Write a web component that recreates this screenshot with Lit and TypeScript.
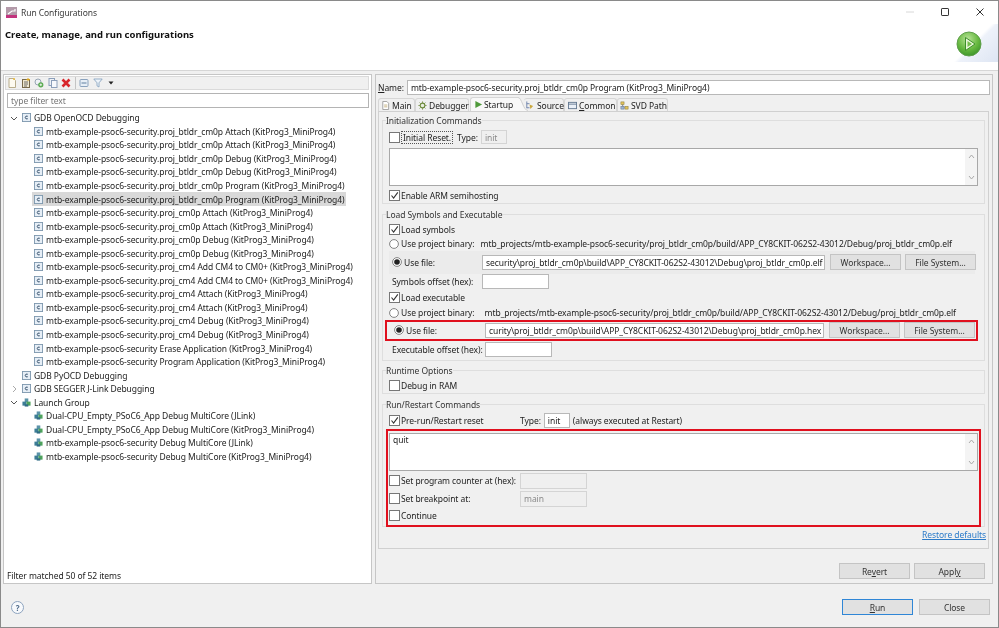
import { LitElement, css, html, svg } from "lit";
import { customElement } from "lit/decorators.js";

const P = "mtb-example-psoc6-security";
const KP = "(KitProg3_MiniProg4)";

type Node = { label: string; kind: "c" | "group"; level: 0 | 1; arrow?: "open" | "closed"; selected?: boolean };

const names = [
  `.proj_btldr_cm0p Attach ${KP}`,
  `.proj_btldr_cm0p Attach ${KP}`,
  `.proj_btldr_cm0p Debug ${KP}`,
  `.proj_btldr_cm0p Debug ${KP}`,
  `.proj_btldr_cm0p Program ${KP}`,
  `.proj_btldr_cm0p Program ${KP}`,
  `.proj_cm0p Attach ${KP}`,
  `.proj_cm0p Attach ${KP}`,
  `.proj_cm0p Debug ${KP}`,
  `.proj_cm0p Debug ${KP}`,
  `.proj_cm4 Add CM4 to CM0+ ${KP}`,
  `.proj_cm4 Add CM4 to CM0+ ${KP}`,
  `.proj_cm4 Attach ${KP}`,
  `.proj_cm4 Attach ${KP}`,
  `.proj_cm4 Debug ${KP}`,
  `.proj_cm4 Debug ${KP}`,
  ` Erase Application ${KP}`,
  ` Program Application ${KP}`,
];

const tree: Node[] = [
  { label: "GDB OpenOCD Debugging", kind: "c", level: 0, arrow: "open" },
  ...names.map((n, i): Node => ({ label: P + n, kind: "c", level: 1, selected: i === 5 })),
  { label: "GDB PyOCD Debugging", kind: "c", level: 0 },
  { label: "GDB SEGGER J-Link Debugging", kind: "c", level: 0, arrow: "closed" },
  { label: "Launch Group", kind: "group", level: 0, arrow: "open" },
  { label: "Dual-CPU_Empty_PSoC6_App Debug MultiCore (JLink)", kind: "group", level: 1 },
  { label: `Dual-CPU_Empty_PSoC6_App Debug MultiCore ${KP}`, kind: "group", level: 1 },
  { label: `${P} Debug MultiCore (JLink)`, kind: "group", level: 1 },
  { label: `${P} Debug MultiCore ${KP}`, kind: "group", level: 1 },
];

const cIcon = html`<svg class="ico" viewBox="0 0 10 10">
  <rect x=".5" y=".5" width="9" height="9" fill="#e6eef6" stroke="#7d97ad" />
  <path d="M6.4 3.6 Q4 2.6 3.6 5 Q4 7.4 6.4 6.4" fill="none" stroke="#35506b" stroke-width="1.1" />
</svg>`;

const groupIcon = html`<svg class="ico" viewBox="0 0 10 10">
  <rect x="3" y=".5" width="4" height="4" fill="#5b93a8" />
  <rect x=".5" y="4" width="4.5" height="4.5" fill="#3d7d96" />
  <rect x="5" y="4" width="4.5" height="4.5" fill="#4ea35c" />
  <rect x="3" y="7" width="4" height="2.5" fill="#2f6c84" />
</svg>`;

const chevron = (dir: "open" | "closed") =>
  svg`<path d=${dir === "open" ? "M1 3 L4 6 L7 3" : "M3 1 L6 4 L3 7"} fill="none"
    stroke=${dir === "open" ? "#555" : "#aaa"} stroke-width="1" />`;

@customElement("app-root")
export class AppRoot extends LitElement {
  static styles = css`
    :host {
      display: block;
      width: 999px;
      height: 628px;
      box-sizing: border-box;
      border: 1px solid #8a8a8a;
      background: #f0f0f0;
      font-family: "Noto Sans", "Open Sans", sans-serif;
      font-size: 8.5px;
      letter-spacing: -0.07px;
      color: #222;
      overflow: hidden;
      filter: blur(0.3px);
    }
    * {
      box-sizing: border-box;
    }
    .title {
      height: 23px;
      background: #fff;
      display: flex;
      align-items: center;
      padding-left: 5px;
      gap: 4px;
      color: #3a3a3a;
    }
    .title .logo {
      width: 11px;
      height: 11px;
      flex: none;
    }
    .title .text {
      flex: 1;
    }
    .winbtns {
      display: flex;
      gap: 17px;
      padding-right: 9px;
      margin-top: -2px;
      align-items: center;
    }
    .winbtns svg {
      width: 18px;
      height: 12px;
      display: block;
    }
    .banner {
      height: 47px;
      background-color: #fff;
      background-image: linear-gradient(135deg, #fff 46%, #eef2fa 52%, #dde5f3 100%);
      background-size: 44px 38px;
      background-repeat: no-repeat;
      background-position: right 0 top 0;
      border-bottom: 1px solid #d6d6d6;
      display: flex;
      justify-content: space-between;
      padding: 3px 16px 0 4px;
    }
    .banner b {
      font-size: 9.5px;
      font-weight: 700;
      letter-spacing: 0;
      color: #111;
      line-height: 16px;
    }
    .banner svg {
      width: 26px;
      height: 26px;
      margin-top: 4px;
    }
    .main {
      display: grid;
      grid-template-columns: 369px 618px;
      gap: 3px;
      padding: 3px 0 0 2px;
      height: 513px;
    }
    .left,
    .right {
      border: 1px solid #c6c6c6;
      height: 510px;
    }
    .left {
      background: #fff;
      display: flex;
      flex-direction: column;
    }
    .toolbar {
      height: 14px;
      margin: 1px 2px 0 1px;
      background: #f0f0f0;
      border: 1px solid #dadada;
      display: flex;
      align-items: center;
      gap: 3.5px;
      padding-left: 1px;
    }
    .toolbar svg {
      width: 10px;
      height: 10px;
      flex: none;
    }
    .toolbar .sep {
      width: 1px;
      height: 12px;
      background: #c4c4c4;
    }
    .filter {
      margin: 3px 2px 0 3px;
      height: 15px;
      border: 1px solid #b4b4b4;
      padding-left: 3px;
      line-height: 14px;
      color: #777;
    }
    .tree {
      flex: 1;
      padding-top: 3px;
    }
    .row {
      height: 13.55px;
      display: flex;
      align-items: center;
      white-space: pre;
    }
    .row .arrow {
      width: 8px;
      height: 8px;
      margin-left: 6px;
      margin-right: 4px;
      flex: none;
    }
    .row.child {
      margin-left: 28px;
      padding: 0 2px;
      width: fit-content;
    }
    .row.sel {
      background: #d9d9d9;
    }
    .ico {
      width: 9px;
      height: 9px;
      flex: none;
      margin-right: 3px;
    }
    .row .lbl {
      line-height: 13px;
    }
    .matched {
      height: 15px;
      padding-left: 3px;
      line-height: 15px;
    }
    .right {
      padding: 0 2px;
    }
    .name {
      display: flex;
      align-items: center;
      height: 22px;
      padding-top: 3px;
      gap: 3px;
    }
    .input {
      height: 15px;
      background: #fff;
      border: 1px solid #b8b8b8;
      line-height: 13px;
      padding-left: 3px;
      white-space: nowrap;
      overflow: hidden;
      flex: none;
    }
    .input.off {
      background: #efefef;
      border-color: #d4d4d4;
      color: #8a8a8a;
    }
    .input.path {
      direction: rtl;
      text-align: left;
    }
    .w-name {
      width: 583px;
    }
    .w-sym {
      width: 343px;
    }
    .w-exe {
      width: 339px;
    }
    .w-type {
      width: 26px;
    }
    .w-off {
      width: 67px;
    }
    .h-14 {
      height: 14px;
    }
    .h-16 {
      height: 16px;
    }
    u {
      text-underline-offset: 1px;
    }
    .tabs {
      display: flex;
      height: 14px;
      align-items: flex-end;
    }
    .tab {
      height: 13px;
      border: 1px solid #d6d6d6;
      border-bottom: none;
      border-radius: 3px 3px 0 0;
      display: flex;
      align-items: center;
      gap: 2px;
      padding: 0 0 0 2px;
      flex: none;
    }
    .tab svg {
      width: 9px;
      height: 9px;
      flex: none;
    }
    .t-main {
      width: 37px;
    }
    .t-debugger {
      width: 54px;
    }
    .t-startup {
      width: 48px;
      height: 14px;
      margin-left: 1px;
      padding-left: 3px;
      gap: 1px;
      background: #f8f8f8;
      border-right: none;
      border-radius: 3px 0 0 0;
    }
    .t-source {
      width: 40px;
      margin-left: -4px;
      padding-left: 1px;
      gap: 3px;
      border-left: none;
    }
    .t-common {
      width: 53px;
      padding-left: 3px;
    }
    .t-svd {
      width: 51px;
    }
    .tabs .curve {
      width: 10px;
      height: 14px;
      flex: none;
    }
    .folder {
      border: 1px solid #d0d0d0;
      height: 438px;
      padding: 2px 3px 0;
      margin-right: 1px;
    }
    fieldset {
      margin: 0 0 3.5px;
      padding: 0;
      border: 1px solid #dedede;
      min-width: 0;
    }
    .g-init {
      height: 90px;
    }
    .g-load {
      height: 153px;
    }
    .g-runtime {
      height: 30px;
    }
    .g-restart {
      height: 129px;
      margin-bottom: 0;
    }
    legend {
      margin-left: 3px;
      padding: 0;
      line-height: 13px;
      color: #333;
    }
    .line {
      display: flex;
      align-items: center;
      height: 14px;
      padding-left: 6px;
      white-space: nowrap;
      flex: none;
    }
    .line.radio-line {
      padding-left: 3px;
    }
    .line.off-line {
      padding-left: 9px;
      margin-top: 1px;
    }
    .line.off-line.exe {
      margin-top: 2px;
    }
    .mt-1 {
      margin-top: 1px;
    }
    .mt-2 {
      margin-top: 2px;
    }
    .mt-3 {
      margin-top: 3px;
    }
    .box {
      width: 11px;
      height: 11px;
      border: 1px solid #777;
      background: #fff;
      flex: none;
      margin-right: 1px;
      display: block;
    }
    .radio {
      width: 10px;
      height: 10px;
      flex: none;
      margin: 0 2px 0 3px;
    }
    .focus {
      border: 1px dotted #555;
      padding: 0 1px;
      line-height: 11px;
    }
    .type-off {
      margin: 0 3px 0 4px;
    }
    .area-wrap {
      padding: 4px 6px 2px;
    }
    .area {
      height: 38px;
      background: #fff;
      border: 1px solid #a8a8a8;
      position: relative;
      padding: 0 3px;
    }
    .area .sb {
      position: absolute;
      right: 0;
      top: 0;
      bottom: 0;
      width: 12px;
      background: #f4f4f4;
      display: flex;
      flex-direction: column;
      justify-content: space-between;
      align-items: center;
      padding: 5px 0;
    }
    .sb svg {
      width: 7px;
      height: 5px;
      display: block;
    }
    .btn {
      height: 16px;
      width: 71px;
      background: #e1e1e1;
      border: 1px solid #c4c4c4;
      display: flex;
      align-items: center;
      justify-content: center;
      flex: none;
      color: #333;
    }
    .run {
      border: 1.5px solid #2f86d6;
    }
    .band {
      height: 23px;
      background: #ebebeb;
      margin-left: 6px;
      margin-right: 9px;
      display: flex;
      align-items: center;
      gap: 4px;
    }
    .band .lab {
      width: 89px;
      display: flex;
      align-items: center;
      flex: none;
    }
    .band .input {
      margin-right: 1px;
    }
    .band.redtop {
      border: 2px solid #e0101e;
      height: 21px;
      margin: 0 6px 0 2px;
      padding-left: 4px;
      background: none;
    }
    .redtop .lab {
      width: 90px;
    }
    .bin-a {
      margin-left: 6px;
    }
    .bin-b {
      margin-left: 10px;
    }
    .lab-sym {
      width: 90px;
      flex: none;
    }
    .lab-exe {
      width: 93px;
      flex: none;
    }
    .lab-cmd {
      width: 119px;
      flex: none;
    }
    .pre {
      height: 15px;
      margin-top: 2px;
    }
    .type-on {
      margin: 0 3px;
    }
    .redbig {
      border: 2px solid #e0101e;
      margin: 1px 3px 0 3px;
      height: 98px;
      padding-top: 2px;
    }
    .redbig .line {
      padding-left: 1px;
      margin-top: 2px;
    }
    .redbig .line.tall {
      height: 16px;
    }
    .redbig .pad {
      padding: 0 1px;
    }
    .restore {
      display: flex;
      justify-content: flex-end;
      margin-right: -1px;
      margin-top: 1px;
      color: #2a7ac9;
      text-decoration: underline;
      line-height: 13px;
    }
    .actions {
      display: flex;
      justify-content: flex-end;
      gap: 4px;
      margin-top: 14px;
      padding-right: 5px;
    }
    .footer {
      display: flex;
      align-items: center;
      height: 42px;
      padding: 4px 8px 0 10px;
      gap: 6px;
    }
    .help {
      width: 13px;
      height: 13px;
      border: 1.5px solid #8ea4bf;
      border-radius: 50%;
      display: flex;
      align-items: center;
      justify-content: center;
      color: #4f6b8a;
      font-weight: 700;
      font-size: 8px;
      background: #f7f9fc;
      margin-right: auto;
    }
  `;

  private check(on: boolean) {
    return on
      ? html`<svg class="box" viewBox="0 0 9 9"><path d="M1.5 4.5 L3.6 7 L7.8 1.4" fill="none" stroke="#333" stroke-width="1.1" /></svg>`
      : html`<span class="box"></span>`;
  }

  private radio(on: boolean) {
    return html`<svg class="radio" viewBox="0 0 10 10">
      <circle cx="5" cy="5" r="4.4" fill="#fff" stroke="#777" stroke-width=".9" />
      ${on ? svg`<circle cx="5" cy="5" r="2.8" fill="#222" />` : ""}
    </svg>`;
  }

  private scrollArea(text = "") {
    return html`<div class="area">
      ${text}
      <div class="sb">
        <svg viewBox="0 0 7 5"><path d="M1 4 L3.5 1 L6 4" fill="none" stroke="#aaa" /></svg>
        <svg viewBox="0 0 7 5"><path d="M1 1 L3.5 4 L6 1" fill="none" stroke="#aaa" /></svg>
      </div>
    </div>`;
  }

  private toolbar() {
    return html`<div class="toolbar">
      <svg viewBox="0 0 10 10"><path d="M2 .5 H6.5 L8.5 2.5 V9.5 H2 Z" fill="#fdfaf0" stroke="#b9ad8c" /><path d="M7 0 L7 2 M6 1 H8" stroke="#e8b93a" /></svg>
      <svg viewBox="0 0 10 10"><rect x="1.5" y="1.5" width="7" height="8" fill="#efe7cf" stroke="#77694a" /><path d="M3 4 H7 M3 6 H7 M3 8 H6" stroke="#4b4b4b" stroke-width=".8" /><path d="M7 0 V3 M5.5 1.5 H9" stroke="#d9a520" /></svg>
      <svg viewBox="0 0 10 10"><circle cx="4" cy="4" r="3" fill="#eef2f6" stroke="#98a6b4" /><circle cx="6.8" cy="6.8" r="2.6" fill="#58a94f" /><path d="M5.5 6.8 H8.1 M6.8 5.5 V8.1" stroke="#fff" stroke-width=".8" /></svg>
      <svg viewBox="0 0 10 10"><rect x="1" y=".5" width="5.5" height="7" fill="#eef2f8" stroke="#8c9fba" /><rect x="3.5" y="2.5" width="5.5" height="7" fill="#f6f8fc" stroke="#8c9fba" /></svg>
      <svg viewBox="0 0 10 10"><path d="M1.5 1.5 L8.5 8.5 M8.5 1.5 L1.5 8.5" stroke="#d8262c" stroke-width="2.6" /></svg>
      <span class="sep"></span>
      <svg viewBox="0 0 10 10"><rect x="1" y="1.5" width="8" height="7" rx="1" fill="#e7eef6" stroke="#8aa2bd" /><path d="M2.5 5 H7.5" stroke="#5f7f9f" /></svg>
      <svg viewBox="0 0 10 10"><path d="M.8 1 H9.2 L6 4.8 V9 L4 7.8 V4.8 Z" fill="#eef4fa" stroke="#8aa6c2" stroke-width=".9" /></svg>
      <svg viewBox="0 0 10 10"><path d="M2.5 3.5 H7.5 L5 6.5 Z" fill="#222" /></svg>
    </div>`;
  }

  private treeRow(n: Node) {
    const icon = n.kind === "c" ? cIcon : groupIcon;
    if (n.level === 1) {
      return html`<div class="row child ${n.selected ? "sel" : ""}">${icon}<span class="lbl">${n.label}</span></div>`;
    }
    return html`<div class="row">
      <svg class="arrow" viewBox="0 0 8 8">${n.arrow ? chevron(n.arrow) : ""}</svg>${icon}<span class="lbl">${n.label}</span>
    </div>`;
  }

  private tabs() {
    return html`<div class="tabs">
      <div class="tab t-main"><svg viewBox="0 0 10 10"><path d="M2 .5 H6.5 L8.5 2.5 V9.5 H2 Z" fill="#fff" stroke="#9a9a9a" /><path d="M3.5 4.5 H7 M3.5 6.5 H7" stroke="#b49a5a" stroke-width=".8" /></svg>Main</div>
      <div class="tab t-debugger"><svg viewBox="0 0 10 10"><circle cx="5" cy="5" r="2.6" fill="#e9efe0" stroke="#6d8a3c" stroke-width="1.2" /><path d="M5 .5 V2 M5 8 V9.5 M.5 5 H2 M8 5 H9.5 M1.8 1.8 L2.9 2.9 M7.1 7.1 L8.2 8.2 M8.2 1.8 L7.1 2.9 M2.9 7.1 L1.8 8.2" stroke="#6d8a3c" /></svg>Debugger</div>
      <div class="tab t-startup"><svg viewBox="0 0 10 10"><path d="M1.5 1 L9 5 L1.5 9 Z" fill="#4f9a3a" /></svg>Startup</div>
      <svg class="curve" viewBox="0 0 10 14"><path d="M0 .5 C4 .5 5 13.5 10 13.5 V14 H0 Z" fill="#f8f8f8" /><path d="M0 .5 C4 .5 5 13.5 10 13.5" fill="none" stroke="#cfcfcf" /></svg>
      <div class="tab t-source"><svg viewBox="0 0 10 10"><path d="M2 .5 V8 M2 3 H5 M2 7.5 H5" stroke="#6a7fa8" /><path d="M5 4 L9 5.5 L6 9 Z" fill="#c9a73c" /></svg>Source</div>
      <div class="tab t-common"><svg viewBox="0 0 10 10"><rect x=".5" y="1.5" width="9" height="7" fill="#e9eff7" stroke="#61768f" /><path d="M.5 3.5 H9.5" stroke="#61768f" /></svg><span><u>C</u>ommon</span></div>
      <div class="tab t-svd"><svg viewBox="0 0 10 10"><rect x="1" y="1" width="3.5" height="3" fill="#e3c35a" stroke="#8a7a3a" stroke-width=".6" /><rect x="5.5" y="6" width="3.5" height="3" fill="#e3c35a" stroke="#8a7a3a" stroke-width=".6" /><rect x="1" y="6" width="3.5" height="3" fill="#9fb4d0" stroke="#5f7592" stroke-width=".6" /><path d="M3 4 V6 M5 7.5 H5.5" stroke="#777" /></svg>SVD Path</div>
    </div>`;
  }

  render() {
    return html`
      <div class="title">
        <svg class="logo" viewBox="0 0 11 11">
          <rect width="11" height="8" fill="#b39aa9" />
          <path d="M2 7 L6 4 L9 4 L9 2" fill="none" stroke="#fff" stroke-width="1.2" />
          <rect y="8" width="11" height="3" fill="#c2347e" />
        </svg>
        <span class="text">Run Configurations</span>
        <div class="winbtns">
          <svg viewBox="0 0 18 12"><path d="M5 6 H13" stroke="#d8d8d8" /></svg>
          <svg viewBox="0 0 18 12"><rect x="5.5" y="2.5" width="7" height="7" rx=".6" fill="none" stroke="#333" /></svg>
          <svg viewBox="0 0 18 12"><path d="M5.5 2.5 L12.5 9.5 M12.5 2.5 L5.5 9.5" stroke="#333" /></svg>
        </div>
      </div>
      <div class="banner">
        <b>Create, manage, and run configurations</b>
        <svg viewBox="0 0 26 26">
          <defs>
            <radialGradient id="g" cx=".45" cy=".3" r=".8">
              <stop offset="0" stop-color="#b9e39a" />
              <stop offset=".55" stop-color="#66b83f" />
              <stop offset="1" stop-color="#2f8a24" />
            </radialGradient>
          </defs>
          <circle cx="13" cy="13" r="12" fill="url(#g)" stroke="#5f9f4c" />
          <path d="M9.5 6.5 L19 13 L9.5 19.5 Z" fill="#e9f7d8" stroke="#3d8f2a" />
          <path d="M11.5 10 L16 13 L11.5 16 Z" fill="#74bd4c" />
        </svg>
      </div>

      <div class="main">
        <div class="left">
          ${this.toolbar()}
          <div class="filter">type filter text</div>
          <div class="tree">${tree.map((n) => this.treeRow(n))}</div>
          <div class="matched">Filter matched 50 of 52 items</div>
        </div>

        <div class="right">
          <div class="name">
            <span><u>N</u>ame:</span>
            <div class="input w-name">${P}.proj_btldr_cm0p Program ${KP}</div>
          </div>
          ${this.tabs()}
          <div class="folder">
            <fieldset class="g-init">
              <legend>Initialization Commands</legend>
              <div class="line mt-3">
                ${this.check(false)}<span class="focus">Initial Reset.</span>
                <span class="type-off">Type:</span>
                <div class="input off w-type h-14">init</div>
              </div>
              <div class="area-wrap">${this.scrollArea()}</div>
              <div class="line">${this.check(true)}Enable ARM semihosting</div>
            </fieldset>

            <fieldset class="g-load">
              <legend>Load Symbols and Executable</legend>
              <div class="line mt-2">${this.check(true)}Load symbols</div>
              <div class="line radio-line">${this.radio(false)}Use project binary:<span class="bin-a">mtb_projects/${P}/proj_btldr_cm0p/build/APP_CY8CKIT-062S2-43012/Debug/proj_btldr_cm0p.elf</span></div>
              <div class="band">
                <div class="lab">${this.radio(true)}Use file:</div>
                <div class="input path w-sym"><bdi>security\\proj_btldr_cm0p\\build\\APP_CY8CKIT-062S2-43012\\Debug\\proj_btldr_cm0p.elf</bdi></div>
                <div class="btn">Workspace...</div>
                <div class="btn">File System...</div>
              </div>
              <div class="line off-line"><span class="lab-sym">Symbols offset (hex):</span><div class="input w-off"></div></div>
              <div class="line mt-2">${this.check(true)}Load executable</div>
              <div class="line radio-line mt-1">${this.radio(false)}Use project binary:<span class="bin-b">mtb_projects/${P}/proj_btldr_cm0p/build/APP_CY8CKIT-062S2-43012/Debug/proj_btldr_cm0p.elf</span></div>
              <div class="band redtop">
                <div class="lab">${this.radio(true)}Use file:</div>
                <div class="input path w-exe"><bdi>curity\\proj_btldr_cm0p\\build\\APP_CY8CKIT-062S2-43012\\Debug\\proj_btldr_cm0p.hex</bdi></div>
                <div class="btn">Workspace...</div>
                <div class="btn">File System...</div>
              </div>
              <div class="line off-line exe"><span class="lab-exe">Executable offset (hex):</span><div class="input w-off"></div></div>
            </fieldset>

            <fieldset class="g-runtime">
              <legend>Runtime Options</legend>
              <div class="line mt-1">${this.check(false)}Debug in RAM</div>
            </fieldset>

            <fieldset class="g-restart">
              <legend>Run/Restart Commands</legend>
              <div class="line pre">
                ${this.check(true)}<span class="lab-cmd">Pre-run/Restart reset</span>Type:
                <div class="input w-type type-on">init</div>(always executed at Restart)
              </div>
              <div class="redbig">
                <div class="pad">${this.scrollArea("quit")}</div>
                <div class="line tall">${this.check(false)}<span class="lab-cmd">Set program counter at (hex):</span><div class="input off w-off h-16"></div></div>
                <div class="line tall">${this.check(false)}<span class="lab-cmd">Set breakpoint at:</span><div class="input off w-off h-16">main</div></div>
                <div class="line">${this.check(false)}Continue</div>
              </div>
            </fieldset>
            <div class="restore"><span>Restore defaults</span></div>
          </div>
          <div class="actions">
            <div class="btn"><span>Re<u>v</u>ert</span></div>
            <div class="btn"><span>Appl<u>y</u></span></div>
          </div>
        </div>
      </div>

      <div class="footer">
        <div class="help">?</div>
        <div class="btn run"><span><u>R</u>un</span></div>
        <div class="btn">Close</div>
      </div>
    `;
  }
}
